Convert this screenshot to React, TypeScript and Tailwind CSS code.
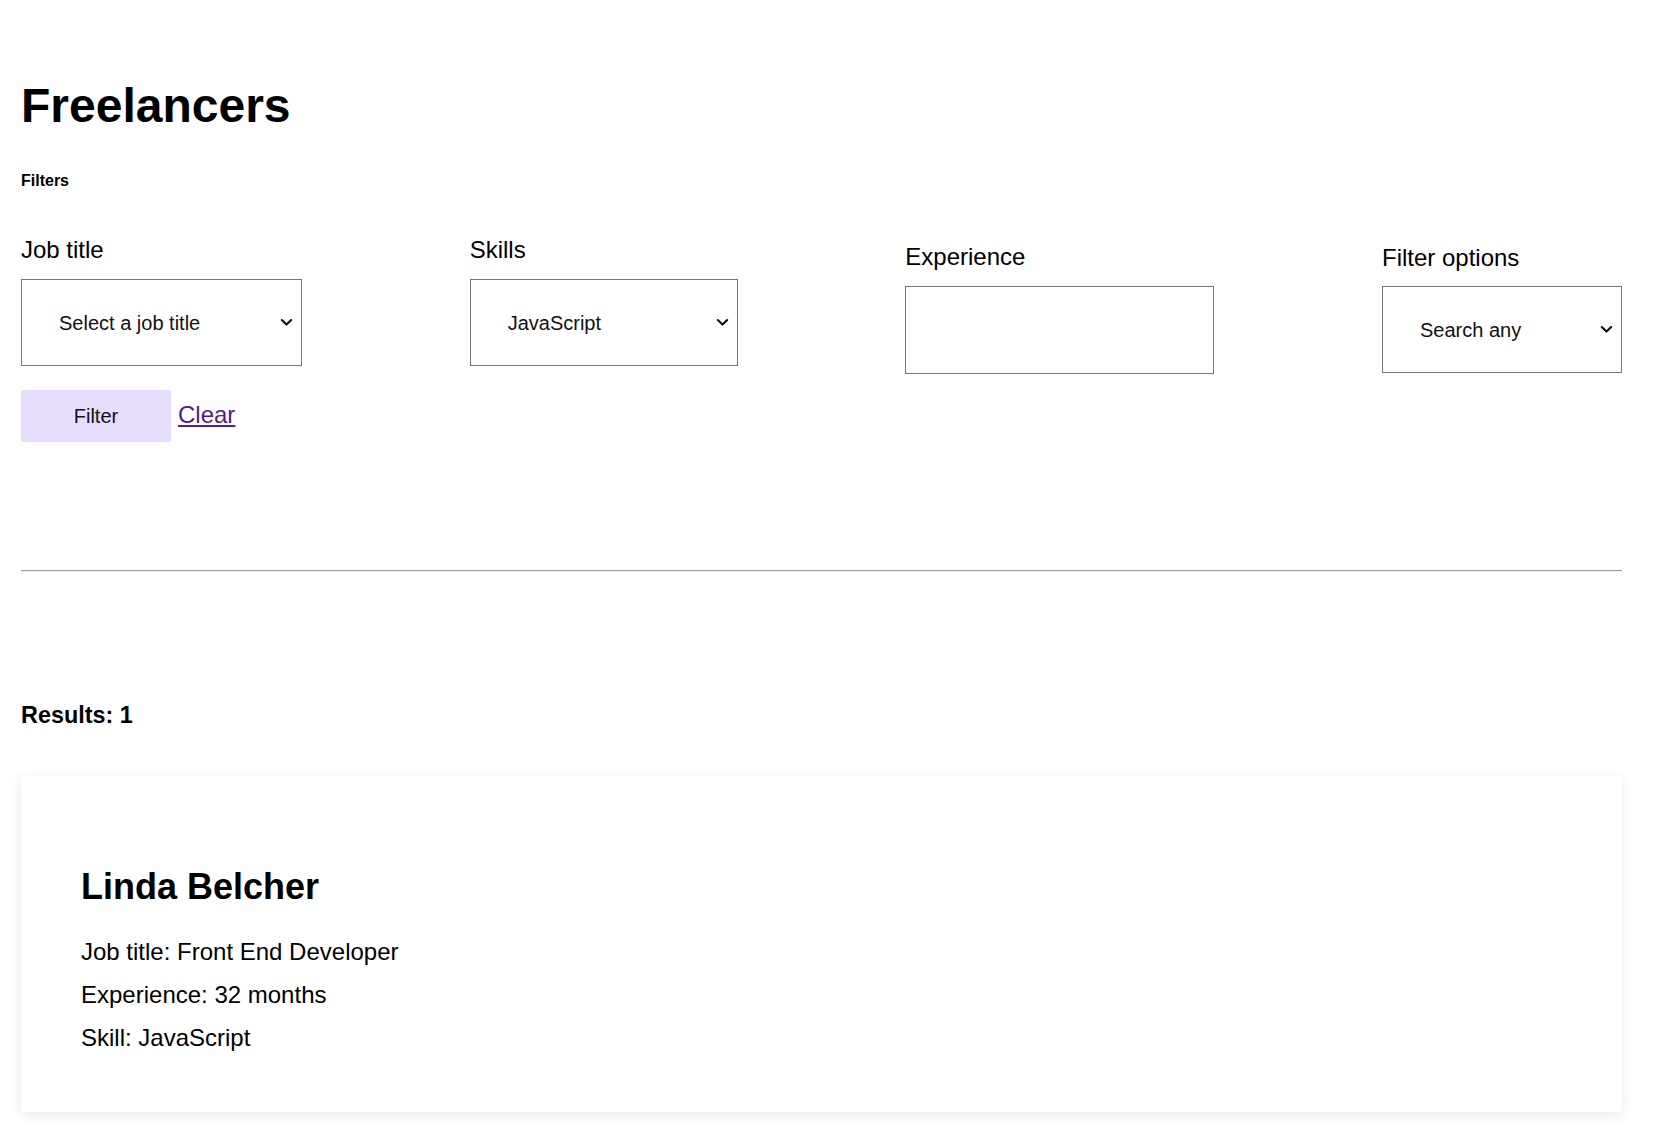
import React from 'react';

const Chevron = () => (
    <svg width="13" height="9" viewBox="0 0 13 9" fill="none" className="shrink-0">
        <path d="M1.8 2 L6.5 6.6 L11.2 2" stroke="#111" strokeWidth="2.1" strokeLinecap="round" strokeLinejoin="round" />
    </svg>
);

interface SelectBoxProps {
    value: string;
    width: string;
}

const SelectBox: React.FC<SelectBoxProps> = ({ value, width }) => (
    <div className={`${width} h-[87px] border border-[#767676] bg-white flex items-center justify-between pl-[37px] pr-[8px]`}>
        <span className="text-[20px] text-[#111]">{value}</span>
        <Chevron />
    </div>
);

const App: React.FC = () => {
    return (
        <div className="min-h-screen bg-white pl-[21px] font-['Liberation_Sans',Arial,sans-serif] text-black">
            <div className="w-[1601px] flex flex-col">
                {/* Header */}
                <h1 className="mt-[82px] text-[48px] leading-[48px] font-bold">Freelancers</h1>
                <h2 className="mt-[41px] text-[16px] leading-[20px] font-bold">Filters</h2>

                {/* Filter fields */}
                <div className="mt-[45px] flex justify-between items-start">
                    <div className="w-[281px] flex flex-col gap-[15px]">
                        <label className="text-[24px] leading-[28px]">Job title</label>
                        <SelectBox value="Select a job title" width="w-[281px]" />
                    </div>
                    <div className="w-[268px] flex flex-col gap-[15px]">
                        <label className="text-[24px] leading-[28px]">Skills</label>
                        <SelectBox value="JavaScript" width="w-[268px]" />
                    </div>
                    <div className="w-[309px] mt-[7px] flex flex-col gap-[15px]">
                        <label className="text-[24px] leading-[28px]">Experience</label>
                        <div className="w-[309px] h-[88px] border border-[#767676] bg-white" />
                    </div>
                    <div className="w-[240px] mt-[8px] flex flex-col gap-[15px]">
                        <label className="text-[24px] leading-[28px]">Filter options</label>
                        <div className="-mt-[1px]">
                            <SelectBox value="Search any" width="w-[240px]" />
                        </div>
                    </div>
                </div>

                {/* Actions */}
                <div className="mt-[16px] flex items-baseline gap-[7px]">
                    <button className="w-[150px] h-[52px] bg-[#e6dcfc] text-[20px] text-[#111] flex items-center justify-center">
                        Filter
                    </button>
                    <a href="#" className="text-[24px] text-[#551a8b] underline">Clear</a>
                </div>

                <hr className="mt-[128px] h-0 border-t border-b border-t-[#9a9a9a] border-b-[#eeeeee]" />

                {/* Results */}
                <h3 className="mt-[129px] text-[23.4px] leading-[28px] font-bold">Results: 1</h3>

                <div className="mt-[47px] bg-white shadow-[0_3px_12px_rgba(0,0,0,0.09)] pl-[60px] pt-[91px] pb-[53px]">
                    <h2 className="text-[36px] leading-[40px] font-bold">Linda Belcher</h2>
                    <div className="mt-[23px] flex flex-col text-[24px] leading-[43px]">
                        <p>Job title: Front End Developer</p>
                        <p>Experience: 32 months</p>
                        <p>Skill: JavaScript</p>
                    </div>
                </div>
            </div>
        </div>
    );
};

export default App;
